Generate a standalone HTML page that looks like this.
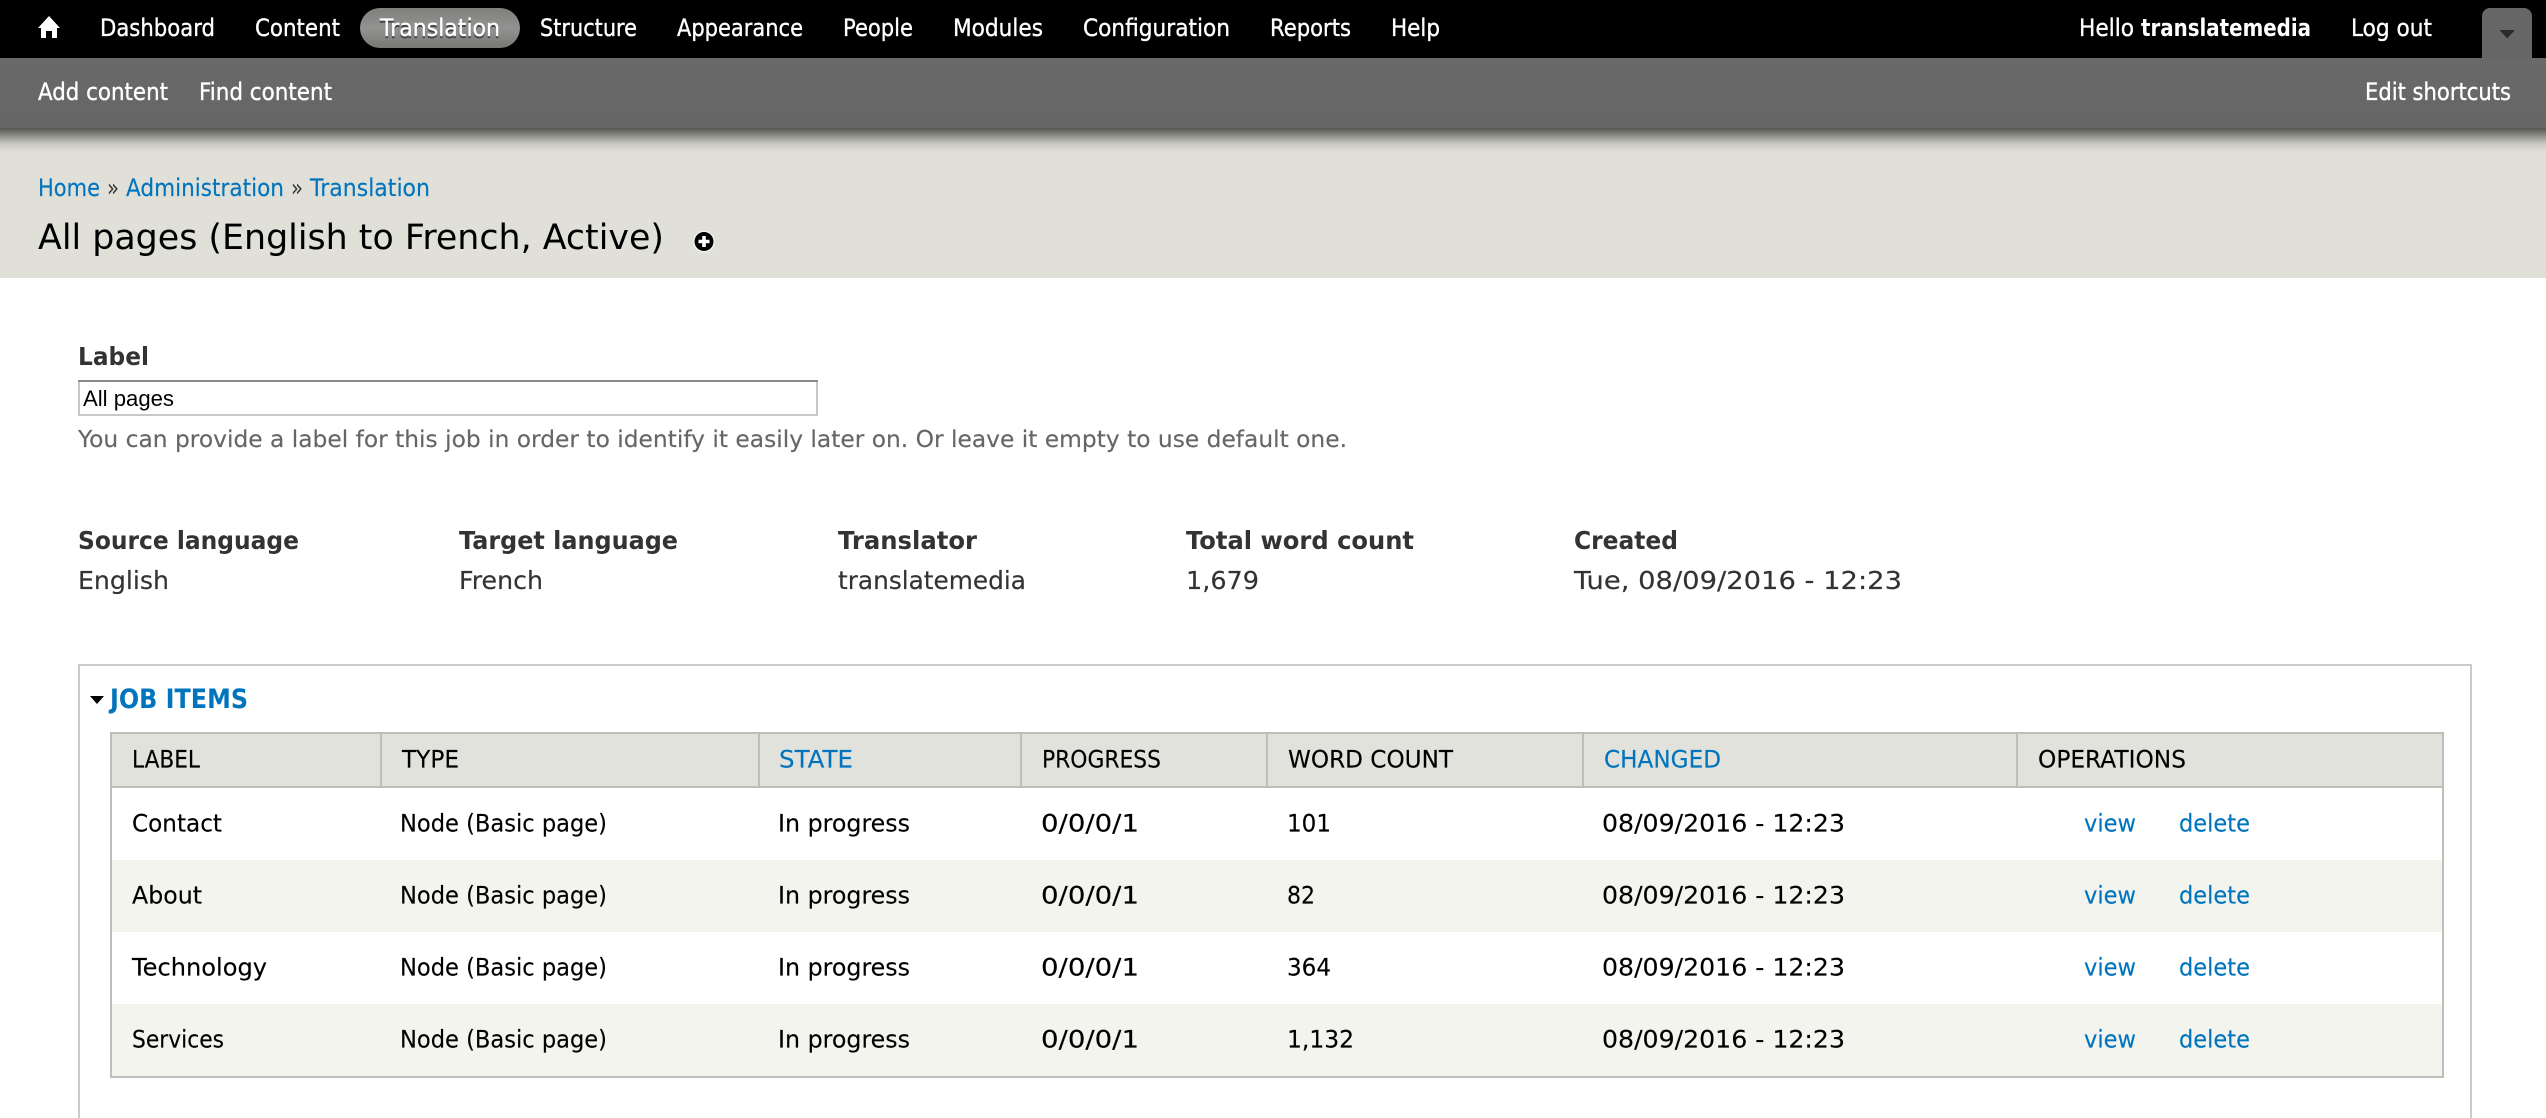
<!DOCTYPE html>
<html lang="en">
<head>
<meta charset="utf-8">
<title>All pages (English to French, Active)</title>
<style>
html,body{margin:0;padding:0;background:#fff;width:2546px;height:1118px;overflow:hidden}
svg{display:block}
text{font-family:"DejaVu Sans","Liberation Sans",sans-serif;white-space:pre}
.n{font-size:24px;fill:#fff;stroke:#fff;stroke-width:.35px}
.nb{font-size:24px;fill:#fff;font-weight:bold}
.a{fill:#0074bd}
.c{font-size:24px;fill:#000;stroke:#000;stroke-width:.15px}
.l{font-size:24px;fill:#0074bd;stroke:#0074bd;stroke-width:.15px}
.h{font-size:24px;fill:#000;stroke:#000;stroke-width:.15px}
.hl{font-size:24px;fill:#0074bd;stroke:#0074bd;stroke-width:.15px}
.m{font-size:25px;fill:#333;stroke:#333;stroke-width:.15px}
.mb{font-size:25px;fill:#333;font-weight:bold}
</style>
</head>
<body>
<svg xmlns="http://www.w3.org/2000/svg" width="2546" height="1118" viewBox="0 0 2546 1118">
<defs>
<linearGradient id="bar" x1="0" y1="0" x2="0" y2="1"><stop offset="0" stop-color="#696969"/><stop offset="1" stop-color="#666"/></linearGradient>
<linearGradient id="sh" x1="0" y1="0" x2="0" y2="1"><stop offset="0" stop-color="#565651"/><stop offset=".3" stop-color="#8a8a85"/><stop offset=".65" stop-color="#c8c8c1"/><stop offset="1" stop-color="#e0e0d8"/></linearGradient>
<linearGradient id="pill" x1="0" y1="0" x2="0" y2="1"><stop offset="0" stop-color="#7f7f7d"/><stop offset=".5" stop-color="#929290"/><stop offset="1" stop-color="#787876"/></linearGradient>
</defs>

<!-- bars -->
<rect x="0" y="0" width="2546" height="58" fill="#000"/>
<rect x="0" y="58" width="2546" height="70" fill="url(#bar)"/>
<rect x="0" y="128" width="2546" height="150" fill="#e0e0d8"/>
<rect x="0" y="128" width="2546" height="24" fill="url(#sh)"/>

<!-- home icon -->
<path d="M49 16 L60 28 L57 28 L57 38 L52 38 L52 31 L46 31 L46 38 L41 38 L41 28 L38 28 Z" fill="#fff"/>

<!-- toolbar -->
<rect x="360" y="8" width="160" height="40" rx="20" fill="url(#pill)"/>
<text class="n" x="100" y="36" textLength="115" lengthAdjust="spacingAndGlyphs">Dashboard</text>
<text class="n" x="255" y="36" textLength="85" lengthAdjust="spacingAndGlyphs">Content</text>
<text class="n" x="380" y="36" textLength="120" lengthAdjust="spacingAndGlyphs" style="filter:drop-shadow(0 2px 0 #444)">Translation</text>
<text class="n" x="540" y="36" textLength="97" lengthAdjust="spacingAndGlyphs">Structure</text>
<text class="n" x="677" y="36" textLength="126" lengthAdjust="spacingAndGlyphs">Appearance</text>
<text class="n" x="843" y="36" textLength="70" lengthAdjust="spacingAndGlyphs">People</text>
<text class="n" x="953" y="36" textLength="90" lengthAdjust="spacingAndGlyphs">Modules</text>
<text class="n" x="1083" y="36" textLength="147" lengthAdjust="spacingAndGlyphs">Configuration</text>
<text class="n" x="1270" y="36" textLength="81" lengthAdjust="spacingAndGlyphs">Reports</text>
<text class="n" x="1391" y="36" textLength="49" lengthAdjust="spacingAndGlyphs">Help</text>
<text class="n" x="2079" y="36" textLength="55" lengthAdjust="spacingAndGlyphs">Hello</text>
<text class="nb" x="2141" y="36" textLength="170" lengthAdjust="spacingAndGlyphs">translatemedia</text>
<text class="n" x="2351" y="36" textLength="81" lengthAdjust="spacingAndGlyphs">Log out</text>
<path d="M2482 58 V16 a8 8 0 0 1 8 -8 H2524 a8 8 0 0 1 8 8 V58 Z" fill="#666"/>
<path d="M2499.5 30 H2515 L2507.2 38.5 Z" fill="#2b2b2b"/>

<!-- shortcuts -->
<text class="n" x="38" y="100" textLength="130" lengthAdjust="spacingAndGlyphs">Add content</text>
<text class="n" x="199" y="100" textLength="133" lengthAdjust="spacingAndGlyphs">Find content</text>
<text class="n" x="2365" y="100" textLength="146" lengthAdjust="spacingAndGlyphs">Edit shortcuts</text>

<!-- breadcrumb -->
<text class="l" x="38" y="196" textLength="62" lengthAdjust="spacingAndGlyphs">Home</text>
<text font-size="24" fill="#333" x="107" y="196" textLength="12" lengthAdjust="spacingAndGlyphs">»</text>
<text class="l" x="126" y="196" textLength="158" lengthAdjust="spacingAndGlyphs">Administration</text>
<text font-size="24" fill="#333" x="291" y="196" textLength="12" lengthAdjust="spacingAndGlyphs">»</text>
<text class="l" x="310" y="196" textLength="120" lengthAdjust="spacingAndGlyphs">Translation</text>

<!-- title -->
<text font-size="35" fill="#000" x="38" y="249" textLength="626" lengthAdjust="spacingAndGlyphs">All pages (English to French, Active)</text>
<circle cx="704" cy="241.5" r="11" fill="#fff" fill-opacity=".6"/>
<circle cx="704" cy="241.5" r="9.5" fill="#000"/>
<path d="M698.5 241.5 H709.5 M704 236 V247" stroke="#fff" stroke-width="3.6" fill="none"/>

<!-- label field -->
<text class="mb" x="78" y="365" textLength="71" lengthAdjust="spacingAndGlyphs">Label</text>
<rect x="79" y="381" width="738" height="34" fill="#fff" stroke="#c8c8c8" stroke-width="2"/>
<rect x="78" y="380" width="740" height="2" fill="#8a8a86"/>
<text font-size="22" fill="#000" x="83" y="406" textLength="91" lengthAdjust="spacingAndGlyphs" style="font-family:'Liberation Sans',sans-serif">All pages</text>
<text font-size="23.5" fill="#666" stroke="#666" stroke-width=".15" x="78" y="447" textLength="1269" lengthAdjust="spacingAndGlyphs">You can provide a label for this job in order to identify it easily later on. Or leave it empty to use default one.</text>

<!-- meta -->
<text class="mb" x="78" y="549" textLength="221" lengthAdjust="spacingAndGlyphs">Source language</text>
<text class="mb" x="459" y="549" textLength="219" lengthAdjust="spacingAndGlyphs">Target language</text>
<text class="mb" x="838" y="549" textLength="139" lengthAdjust="spacingAndGlyphs">Translator</text>
<text class="mb" x="1186" y="549" textLength="228" lengthAdjust="spacingAndGlyphs">Total word count</text>
<text class="mb" x="1574" y="549" textLength="104" lengthAdjust="spacingAndGlyphs">Created</text>
<text class="m" x="78" y="589" textLength="91" lengthAdjust="spacingAndGlyphs">English</text>
<text class="m" x="459" y="589" textLength="84" lengthAdjust="spacingAndGlyphs">French</text>
<text class="m" x="838" y="589" textLength="188" lengthAdjust="spacingAndGlyphs">translatemedia</text>
<text class="m" x="1186" y="589" textLength="73" lengthAdjust="spacingAndGlyphs">1,679</text>
<text class="m" x="1574" y="589" textLength="328" lengthAdjust="spacingAndGlyphs">Tue, 08/09/2016 - 12:23</text>

<!-- fieldset -->
<path d="M79 1118 V665 H2471 V1118" fill="none" stroke="#ccc" stroke-width="2"/>
<path d="M90 696 H104 L97 704 Z" fill="#000"/>
<text font-size="27" font-weight="bold" class="a" x="110" y="708" textLength="138" lengthAdjust="spacingAndGlyphs">JOB ITEMS</text>

<!-- table -->
<rect x="110" y="732" width="2334" height="55" fill="#e1e2dc"/>
<rect x="110" y="860" width="2334" height="72" fill="#f3f4ee"/>
<rect x="110" y="1004" width="2334" height="72" fill="#f3f4ee"/>
<rect x="111" y="733" width="2332" height="344" fill="none" stroke="#bebfb9" stroke-width="2"/>
<rect x="110" y="786" width="2334" height="2" fill="#bebfb9"/>
<rect x="380" y="733" width="2" height="54" fill="#bebfb9"/>
<rect x="758" y="733" width="2" height="54" fill="#bebfb9"/>
<rect x="1020" y="733" width="2" height="54" fill="#bebfb9"/>
<rect x="1266" y="733" width="2" height="54" fill="#bebfb9"/>
<rect x="1582" y="733" width="2" height="54" fill="#bebfb9"/>
<rect x="2016" y="733" width="2" height="54" fill="#bebfb9"/>

<text class="h" x="132" y="767.5" textLength="68" lengthAdjust="spacingAndGlyphs">LABEL</text>
<text class="h" x="402" y="767.5" textLength="57" lengthAdjust="spacingAndGlyphs">TYPE</text>
<text class="hl" x="779" y="767.5" textLength="74" lengthAdjust="spacingAndGlyphs">STATE</text>
<text class="h" x="1042" y="767.5" textLength="119" lengthAdjust="spacingAndGlyphs">PROGRESS</text>
<text class="h" x="1288" y="767.5" textLength="165" lengthAdjust="spacingAndGlyphs">WORD COUNT</text>
<text class="hl" x="1604" y="767.5" textLength="117" lengthAdjust="spacingAndGlyphs">CHANGED</text>
<text class="h" x="2038" y="767.5" textLength="148" lengthAdjust="spacingAndGlyphs">OPERATIONS</text>

<!-- row 1 -->
<text class="c" x="132" y="831.5" textLength="90" lengthAdjust="spacingAndGlyphs">Contact</text>
<text class="c" x="400" y="831.5" textLength="207" lengthAdjust="spacingAndGlyphs">Node (Basic page)</text>
<text class="c" x="778" y="831.5" textLength="132" lengthAdjust="spacingAndGlyphs">In progress</text>
<text class="c" x="1041" y="831.5" textLength="98" lengthAdjust="spacingAndGlyphs">0/0/0/1</text>
<text class="c" x="1287" y="831.5" textLength="44" lengthAdjust="spacingAndGlyphs">101</text>
<text class="c" x="1602" y="831.5" textLength="243" lengthAdjust="spacingAndGlyphs">08/09/2016 - 12:23</text>
<text class="l" x="2084" y="831.5" textLength="52" lengthAdjust="spacingAndGlyphs">view</text>
<text class="l" x="2179" y="831.5" textLength="71" lengthAdjust="spacingAndGlyphs">delete</text>

<!-- row 2 -->
<text class="c" x="132" y="903.5" textLength="70" lengthAdjust="spacingAndGlyphs">About</text>
<text class="c" x="400" y="903.5" textLength="207" lengthAdjust="spacingAndGlyphs">Node (Basic page)</text>
<text class="c" x="778" y="903.5" textLength="132" lengthAdjust="spacingAndGlyphs">In progress</text>
<text class="c" x="1041" y="903.5" textLength="98" lengthAdjust="spacingAndGlyphs">0/0/0/1</text>
<text class="c" x="1287" y="903.5" textLength="28" lengthAdjust="spacingAndGlyphs">82</text>
<text class="c" x="1602" y="903.5" textLength="243" lengthAdjust="spacingAndGlyphs">08/09/2016 - 12:23</text>
<text class="l" x="2084" y="903.5" textLength="52" lengthAdjust="spacingAndGlyphs">view</text>
<text class="l" x="2179" y="903.5" textLength="71" lengthAdjust="spacingAndGlyphs">delete</text>

<!-- row 3 -->
<text class="c" x="132" y="975.5" textLength="135" lengthAdjust="spacingAndGlyphs">Technology</text>
<text class="c" x="400" y="975.5" textLength="207" lengthAdjust="spacingAndGlyphs">Node (Basic page)</text>
<text class="c" x="778" y="975.5" textLength="132" lengthAdjust="spacingAndGlyphs">In progress</text>
<text class="c" x="1041" y="975.5" textLength="98" lengthAdjust="spacingAndGlyphs">0/0/0/1</text>
<text class="c" x="1287" y="975.5" textLength="44" lengthAdjust="spacingAndGlyphs">364</text>
<text class="c" x="1602" y="975.5" textLength="243" lengthAdjust="spacingAndGlyphs">08/09/2016 - 12:23</text>
<text class="l" x="2084" y="975.5" textLength="52" lengthAdjust="spacingAndGlyphs">view</text>
<text class="l" x="2179" y="975.5" textLength="71" lengthAdjust="spacingAndGlyphs">delete</text>

<!-- row 4 -->
<text class="c" x="132" y="1047.5" textLength="92" lengthAdjust="spacingAndGlyphs">Services</text>
<text class="c" x="400" y="1047.5" textLength="207" lengthAdjust="spacingAndGlyphs">Node (Basic page)</text>
<text class="c" x="778" y="1047.5" textLength="132" lengthAdjust="spacingAndGlyphs">In progress</text>
<text class="c" x="1041" y="1047.5" textLength="98" lengthAdjust="spacingAndGlyphs">0/0/0/1</text>
<text class="c" x="1287" y="1047.5" textLength="67" lengthAdjust="spacingAndGlyphs">1,132</text>
<text class="c" x="1602" y="1047.5" textLength="243" lengthAdjust="spacingAndGlyphs">08/09/2016 - 12:23</text>
<text class="l" x="2084" y="1047.5" textLength="52" lengthAdjust="spacingAndGlyphs">view</text>
<text class="l" x="2179" y="1047.5" textLength="71" lengthAdjust="spacingAndGlyphs">delete</text>
</svg>
</body>
</html>
